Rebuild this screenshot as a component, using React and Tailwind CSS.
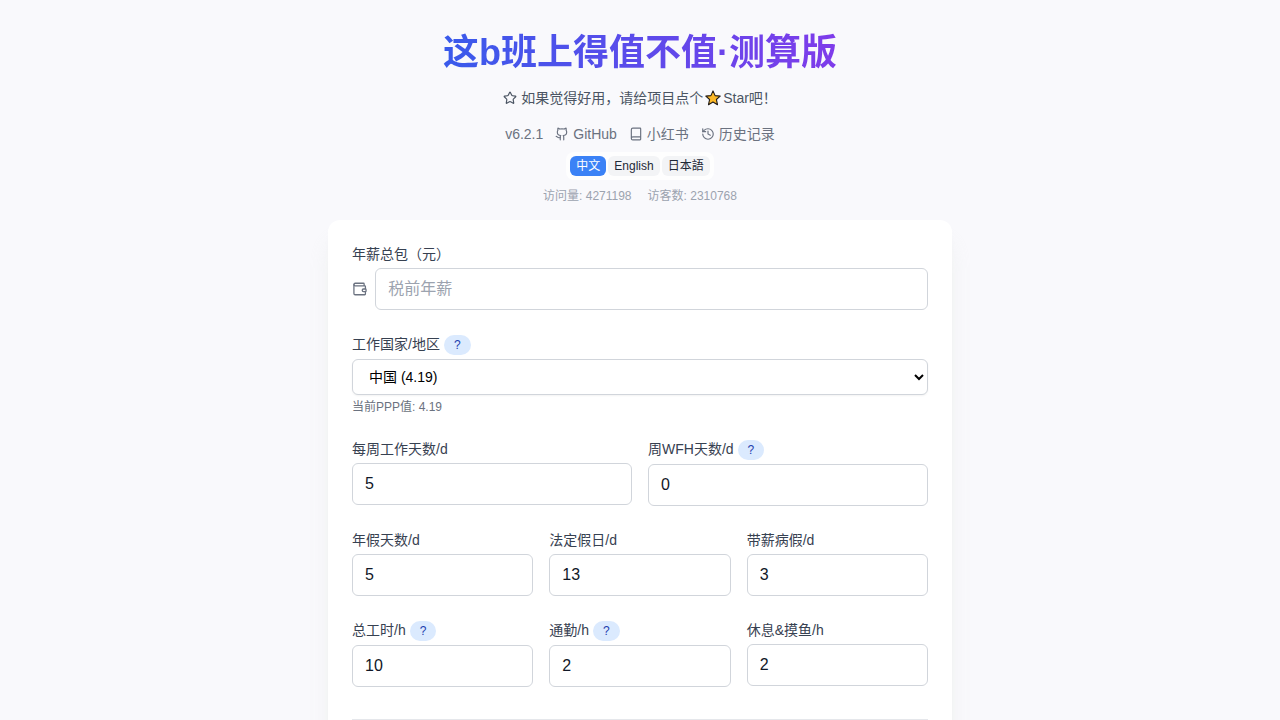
import React, { useState } from 'react';
import { Star, Github, Book, History, Wallet } from 'lucide-react';

const LANGUAGES = [
  { code: 'zh', label: '中文' },
  { code: 'en', label: 'English' },
  { code: 'ja', label: '日本語' },
];

const COUNTRIES = [
  { code: 'CN', name: '中国', ppp: '4.19' },
  { code: 'US', name: '美国', ppp: '1.00' },
  { code: 'JP', name: '日本', ppp: '102.59' },
];

// Small filled star used inside the call-to-action sentence
const StarEmoji = () => (
  <svg className="mx-0.5 h-4 w-4" viewBox="0 0 16 16" aria-hidden="true">
    <path
      d="M8 .9 10.1 5.6 15.2 6.1 11.4 9.5 12.5 14.7 8 12 3.5 14.7 4.6 9.5.8 6.1 5.9 5.6Z"
      fill="#fcb827"
      stroke="#1f1a17"
      strokeWidth="1.1"
      strokeLinejoin="round"
    />
  </svg>
);

const HelpBadge = () => (
  <button
    type="button"
    aria-label="说明"
    className="mt-px ml-1 h-5 rounded-full bg-[#dbeafe] px-2.5 text-xs leading-5 text-[#1e40af]"
  >
    ?
  </button>
);

const FieldLabel = ({ htmlFor, children, help }) => (
  <div className="mb-1 flex items-start text-sm leading-5 text-[#374151]">
    <label htmlFor={htmlFor}>{children}</label>
    {help && <HelpBadge />}
  </div>
);

const NumberField = ({ id, label, value, onChange, help }) => (
  <div>
    <FieldLabel htmlFor={id} help={help}>
      {label}
    </FieldLabel>
    <input
      id={id}
      type="text"
      inputMode="decimal"
      value={value}
      onChange={(e) => onChange(id, e.target.value)}
      className="block w-full rounded-md border border-[#d1d5db] bg-white px-3 py-2 text-base leading-6 text-[#111827] focus:ring-2 focus:ring-blue-500 focus:outline-none"
    />
  </div>
);

const HeaderLink = ({ icon: Icon, children }) => (
  <a href="#" className="flex items-center gap-1 hover:text-gray-700">
    <Icon className="h-3.5 w-3.5" />
    {children}
  </a>
);

const App = () => {
  const [language, setLanguage] = useState('zh');
  const [country, setCountry] = useState('CN');
  const [form, setForm] = useState({
    salary: '',
    workDays: '5',
    wfhDays: '0',
    annualLeave: '5',
    publicHolidays: '13',
    sickLeave: '3',
    workHours: '10',
    commute: '2',
    rest: '2',
  });

  const handleChange = (key, value) => setForm((prev) => ({ ...prev, [key]: value }));
  const ppp = COUNTRIES.find((item) => item.code === country).ppp;

  const field = (id, label, help = false) => (
    <NumberField id={id} label={label} value={form[id]} onChange={handleChange} help={help} />
  );

  return (
    <main className="min-h-screen bg-[#f9f9fc] font-['Liberation_Sans','Noto_Sans_CJK_SC',sans-serif]">
      <div className="mx-auto max-w-2xl px-6 py-8">
        {/* Header */}
        <header className="flex flex-col items-center">
          <h1 className="w-full bg-linear-to-r/srgb from-[#2563eb] to-[#9333ea] bg-clip-text text-center text-4xl leading-[42px] font-bold text-transparent">
            这b班上得值不值·测算版
          </h1>
          <a href="#" className="mt-3.5 flex items-center text-sm leading-5 text-[#4b5563]">
            <Star className="mr-1 h-3.5 w-3.5" />
            如果觉得好用，请给项目点个
            <StarEmoji />
            Star吧！
          </a>
          <nav className="mt-4 flex items-center gap-3 text-sm leading-5 text-[#6b7280]">
            <span>v6.2.1</span>
            <HeaderLink icon={Github}>GitHub</HeaderLink>
            <HeaderLink icon={Book}>小红书</HeaderLink>
            <HeaderLink icon={History}>历史记录</HeaderLink>
          </nav>
          <div className="mt-2 flex gap-0.5 rounded-lg bg-white/80 p-1">
            {LANGUAGES.map(({ code, label }) => (
              <button
                key={code}
                type="button"
                onClick={() => setLanguage(code)}
                className={`h-5 rounded-md px-1.5 text-xs leading-5 ${
                  language === code ? 'bg-[#3b82f6] text-white' : 'bg-[#f3f4f6] text-[#1f2937]'
                }`}
              >
                {label}
              </button>
            ))}
          </div>
          <div className="mt-2 flex gap-4 text-xs leading-4 text-[#9ca3af]">
            <span>访问量: 4271198</span>
            <span>访客数: 2310768</span>
          </div>
        </header>

        {/* Form */}
        <form className="mt-4 space-y-6 rounded-xl bg-white p-6 shadow-xl shadow-[#e4e8e4]/60">
          <div>
            <FieldLabel htmlFor="salary">年薪总包（元）</FieldLabel>
            <div className="flex items-center gap-2">
              <Wallet className="h-4 w-4 text-[#6b7280]" />
              <input
                id="salary"
                type="text"
                inputMode="decimal"
                placeholder="税前年薪"
                value={form.salary}
                onChange={(e) => handleChange('salary', e.target.value)}
                className="block w-full rounded-md border border-[#d1d5db] bg-white px-3 py-2 text-base leading-6 placeholder:text-[#9ca3af] focus:ring-2 focus:ring-blue-500 focus:outline-none"
              />
            </div>
          </div>

          <div>
            <FieldLabel htmlFor="country" help>
              工作国家/地区
            </FieldLabel>
            <select
              id="country"
              value={country}
              onChange={(e) => setCountry(e.target.value)}
              className="block h-9 w-full rounded-md border border-[#d1d5db] bg-white px-3 text-sm text-black shadow-xs"
            >
              {COUNTRIES.map(({ code, name, ppp: value }) => (
                <option key={code} value={code}>
                  {name} ({value})
                </option>
              ))}
            </select>
            <p className="mt-1 text-xs leading-4 text-[#6b7280]">当前PPP值: {ppp}</p>
          </div>

          <div className="grid grid-cols-2 gap-4">
            {field('workDays', '每周工作天数/d')}
            {field('wfhDays', '周WFH天数/d', true)}
          </div>

          <div className="grid grid-cols-3 gap-4">
            {field('annualLeave', '年假天数/d')}
            {field('publicHolidays', '法定假日/d')}
            {field('sickLeave', '带薪病假/d')}
          </div>

          <div className="grid grid-cols-3 gap-4">
            {field('workHours', '总工时/h', true)}
            {field('commute', '通勤/h', true)}
            {field('rest', '休息&摸鱼/h')}
          </div>

          <div className="mt-8 border-t border-[#e5e7eb] pt-6" />
        </form>
      </div>
    </main>
  );
};

export default App;
